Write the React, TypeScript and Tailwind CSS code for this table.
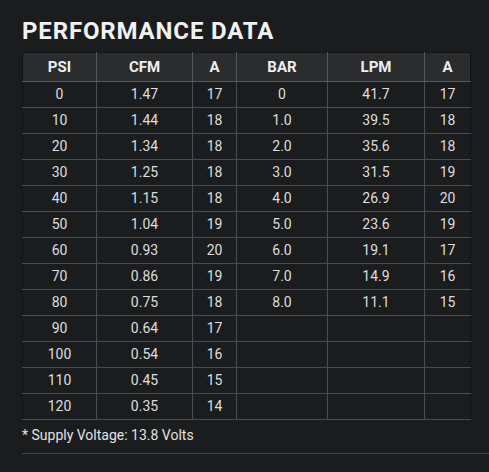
import React from "react";

const left = [
  ["0", "1.47", "17"],
  ["10", "1.44", "18"],
  ["20", "1.34", "18"],
  ["30", "1.25", "18"],
  ["40", "1.15", "18"],
  ["50", "1.04", "19"],
  ["60", "0.93", "20"],
  ["70", "0.86", "19"],
  ["80", "0.75", "18"],
  ["90", "0.64", "17"],
  ["100", "0.54", "16"],
  ["110", "0.45", "15"],
  ["120", "0.35", "14"],
];
const right = [
  ["0", "41.7", "17"],
  ["1.0", "39.5", "18"],
  ["2.0", "35.6", "18"],
  ["3.0", "31.5", "19"],
  ["4.0", "26.9", "20"],
  ["5.0", "23.6", "19"],
  ["6.0", "19.1", "17"],
  ["7.0", "14.9", "16"],
  ["8.0", "11.1", "15"],
];

const widths = ["w-[74px]", "w-[96px]", "w-[44px]", "w-[91px]", "w-[97px]", "w-[46px]"];
const heads = ["PSI", "CFM", "A", "BAR", "LPM", "A"];

export default function App() {
  return (
    <div className="min-h-[472px] w-[489px] bg-[#1b1c1e] overflow-hidden" style={{ fontFamily: "Roboto, 'Liberation Sans', sans-serif" }}>
      <div className="pl-[22px] pt-[17px]">
        <h2 className="text-[24px] leading-[28px] font-bold text-[#f2f2f2] tracking-[0.85px]">PERFORMANCE DATA</h2>
        <table className="mt-[7px] border-collapse table-fixed w-[448px] border border-[#111213]">
          <colgroup>
            {widths.map((w, i) => (
              <col key={i} className={w} />
            ))}
          </colgroup>
          <thead>
            <tr className="bg-[#2a2c2e] h-[29px]">
              {heads.map((h, i) => (
                <th
                  key={i}
                  className={`p-0 text-center text-[15px] font-bold text-[#eeeeee] border-b border-b-[#555759] ${i < 5 ? "border-r border-r-[#555759]" : ""}`}
                >
                  {h}
                </th>
              ))}
            </tr>
          </thead>
          <tbody>
            {left.map((l, r) => {
              const rr = right[r] || ["", "", ""];
              const cells = [...l, ...rr];
              return (
                <tr key={r} className="h-[26px]">
                  {cells.map((c, i) => (
                    <td
                      key={i}
                      className={`p-0 text-center text-[14px] text-[#dedede] border-b border-b-[#4a4c4e] ${i < 5 ? "border-r border-r-[#4a4c4e]" : ""}`}
                    >
                      {c}
                    </td>
                  ))}
                </tr>
              );
            })}
          </tbody>
        </table>
        <p className="mt-[5px] text-[14px] leading-[20px] text-[#e2e2e2]">* Supply Voltage: 13.8 Volts</p>
        <div className="mt-[8px] h-px bg-[#444648] w-[500px]" />
      </div>
    </div>
  );
}
